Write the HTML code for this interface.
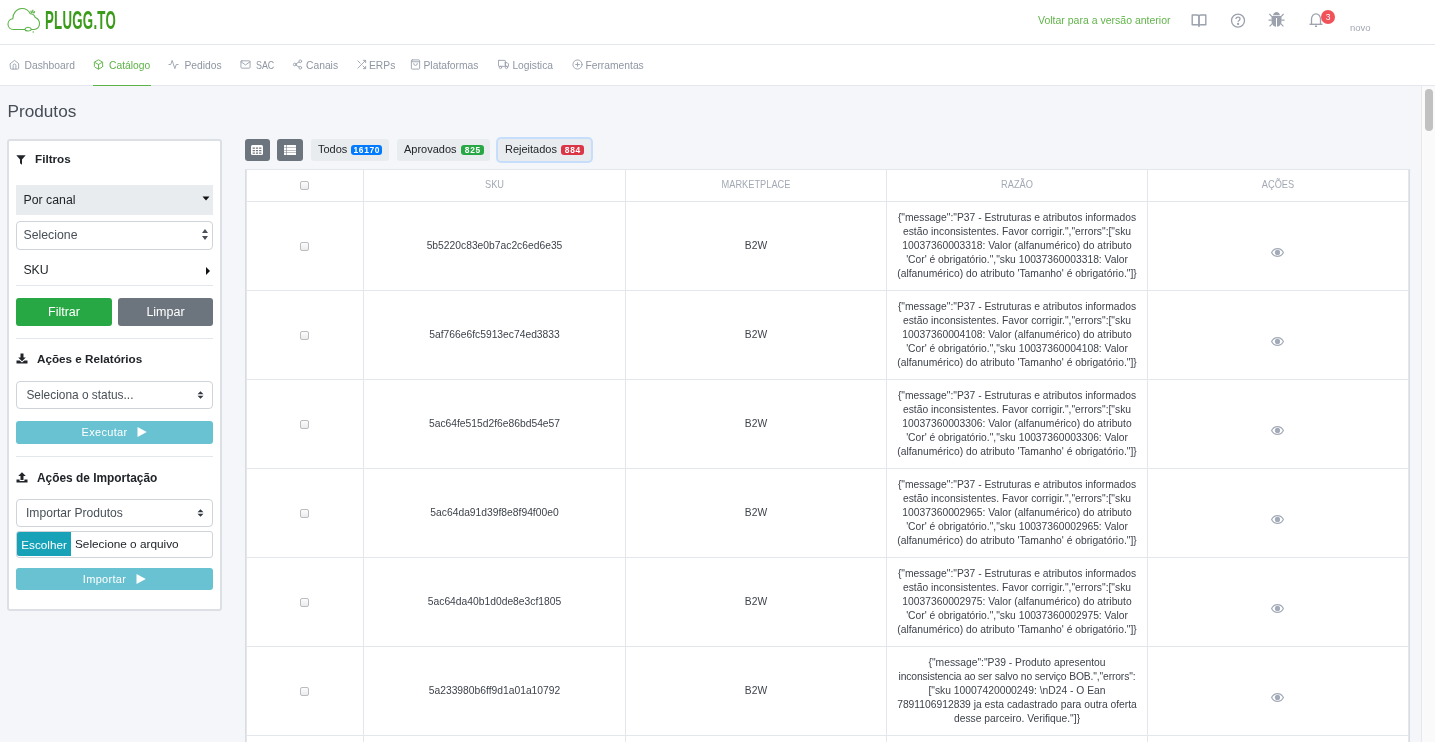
<!DOCTYPE html>
<html><head><meta charset="utf-8">
<style>
*{box-sizing:border-box;margin:0;padding:0}
html,body{width:1435px;height:742px;overflow:hidden;will-change:transform;background:#f5f6fa;font-family:"Liberation Sans",sans-serif;position:relative}
.abs{position:absolute}
#hdr{left:0;top:0;width:1435px;height:45px;background:#fff;border-bottom:1px solid #e4e7ee}
#nav{left:0;top:45px;width:1435px;height:41px;background:#fff;border-bottom:1px solid #e4e7ee}
.nv{position:absolute;top:59px;font-size:10.3px;color:#8c93a3;white-space:nowrap;line-height:14px}
.nv svg{position:absolute;top:1px}
#uline{left:93px;top:85px;width:58px;height:1px;background:#5db446}
#title{left:7.5px;top:100.5px;font-size:17.2px;color:#474d56;line-height:20px}
#card{left:7px;top:139px;width:215px;height:472px;background:#fff;border:2px solid #dce0e5;border-radius:3px}
.c{position:absolute;white-space:nowrap}
.vl{top:169px;width:1px;height:600px;background:#e3e6eb}
.hl{left:246px;width:1163px;height:1px;background:#e3e6eb}
.th{top:178px;font-size:10.4px;color:#a3a9b4;text-align:center;line-height:14px;transform:scaleX(0.89)}
.td{font-size:10.3px;color:#3e434b;text-align:center;line-height:14px;white-space:nowrap}
.chk{width:9px;height:9px;border:1px solid #b9bcc1;border-radius:2px;background:linear-gradient(#fcfcfc,#ececec)}
.tbtn{height:22px;background:#e9ecef;border-radius:3px;font-size:11px;color:#212529;line-height:14px;white-space:nowrap}
.tbtn>span:first-child{top:3px}
.bdg{position:absolute;top:6px;height:10px;border-radius:3px;color:#fff;font-size:8.4px;font-weight:bold;line-height:11px;text-align:center;letter-spacing:0.7px;text-indent:0.7px}
.btn{border-radius:3px;color:#fff;font-size:12.5px;text-align:center;line-height:28px}
.btn2{border-radius:3px;background:#68c2d1;color:#fff;font-size:11px;text-align:center;line-height:22px;letter-spacing:0.3px}
#tbl{left:245px;top:169px;width:1165px;height:600px;background:#fff;border:1px solid #d9dce1;border-top-color:#e3e6eb}
#sb{left:1421px;top:86px;width:14px;height:656px;background:#fafafa;border-left:1px solid #e8e8e8}
#thumb{left:1425px;top:89px;width:8px;height:42px;border-radius:4px;background:#c1c1c1}
</style></head><body>
<div id="hdr" class="abs">
<svg class="abs" style="left:7px;top:7px" width="34" height="26" viewBox="0 0 34 26" fill="none" stroke="#5bb246" stroke-width="1.1">
<path d="M6.5 22.5 C3 22.5 1 20 1 17.2 C1 14.2 3.2 12 5.8 11.8 C5.8 6.5 9.5 1.5 15 1.5 C19 1.5 22 4 23.3 6.8 C25.5 6.8 27.5 8.5 28.3 10.5 C31 11.5 32.5 14 32.5 16.8 C32.5 20.2 30 22.5 27 22.5 L24.5 22.5 C24 21 22.5 20.3 21 20.3 C19.5 20.3 18.3 21 17.8 22.5 Z"/>
<path d="M17.8 22.5 C18.2 23.6 19.5 24 21 24 C22.5 24 24 23.6 24.5 22.5"/>
<path d="M23.8 3.6 L24.6 6.2 M25.8 2.8 L25.8 5.8 M27.8 4.2 L26.6 6.4" stroke-width="1.2"/>
<circle cx="26.2" cy="25" r="0.7" fill="#5bb246" stroke="none"/>
</svg>
<div class="abs" style="left:45px;top:5px;font-size:26px;font-weight:bold;color:#3b9c1b;transform:scaleX(0.51);transform-origin:0 0;line-height:30px;letter-spacing:0.5px">PLUGG.TO</div>
<div class="abs" style="left:1038px;top:13px;font-size:10.5px;color:#62b44b;line-height:14px;white-space:nowrap">Voltar para a versão anterior</div>
<svg class="abs" style="left:1191px;top:13px" width="16" height="15" viewBox="0 0 16 15" fill="none" stroke="#9ba1ad" stroke-width="1.4" stroke-linejoin="round">
<path d="M1.2 2 H6 C7.2 2 8 2.6 8 3.6 V12.6 C8 12 7.2 11.8 6 11.8 H1.2 Z"/><path d="M14.8 2 H10 C8.8 2 8 2.6 8 3.6 V12.6 C8 12 8.8 11.8 10 11.8 H14.8 Z"/><path d="M8 12.4 V14" stroke-width="1.3"/>
</svg>
<svg class="abs" style="left:1230px;top:13px" width="16" height="16" viewBox="0 0 16 16" fill="none" stroke="#9ba1ad" stroke-width="1.3">
<circle cx="8" cy="7.6" r="6.5"/><path d="M6 6.1 C6 4.9 6.9 4.2 8 4.2 C9.1 4.2 10 4.9 10 5.9 C10 7.3 8.1 7.5 8.1 8.8"/><circle cx="8.1" cy="10.9" r="0.5" fill="#9ba1ad"/>
</svg>
<svg class="abs" style="left:1268px;top:11px" width="17" height="17" viewBox="0 0 17 17" fill="#9ba1ad">
<path d="M5 4.2 C5.3 2.3 6.7 1 8.5 1 C10.3 1 11.7 2.3 12 4.2 Z"/>
<path d="M4.2 5 H12.8 C13.2 5 13.5 5.3 13.5 5.7 V10 C13.5 13 11.5 15.6 9 15.8 V7 H8 V15.8 C5.5 15.6 3.5 13 3.5 10 V5.7 C3.5 5.3 3.8 5 4.2 5 Z"/>
<path d="M1.8 2.6 L4.4 5.2 L3.6 6 L1 3.4 Z M15.2 2.6 L12.6 5.2 L13.4 6 L16 3.4 Z M0.5 8.6 H3.6 V9.8 H0.5 Z M13.4 8.6 H16.5 V9.8 H13.4 Z M1.2 15 L3.8 12.2 L4.6 13 L2 15.8 Z M15.8 15 L13.2 12.2 L12.4 13 L15 15.8 Z"/>
</svg>
<svg class="abs" style="left:1308px;top:12px" width="16" height="16" viewBox="0 0 16 16" fill="none" stroke="#9ba1ad" stroke-width="1.3">
<path d="M3.5 12 V7 C3.5 4.2 5.5 1.8 8 1.8 C10.5 1.8 12.5 4.2 12.5 7 V12"/><path d="M1.5 12.3 H14.5"/><path d="M7 14.3 H9" stroke-width="1.5"/>
</svg>
<div class="abs" style="left:1321px;top:10px;width:14px;height:14px;border-radius:7px;background:#f1525a;color:#fff;font-size:8.5px;line-height:14px;text-align:center">3</div>
<div class="abs" style="left:1350px;top:22px;font-size:9.5px;color:#a3a8b3;line-height:12px">novo</div>
</div>
<div id="nav" class="abs"></div>
<svg class="abs" style="left:8.5px;top:58.5px" width="11" height="11" viewBox="0 0 24 24" fill="none" stroke="#9aa1ae" stroke-width="2" stroke-linecap="round" stroke-linejoin="round"><path d="M3 10 L12 3 L21 10 V20 a2 2 0 0 1 -2 2 H5 a2 2 0 0 1 -2 -2 Z"/><path d="M9 22 V14 a3 3 0 0 1 6 0 V22"/></svg><div class="nv" style="left:24.5px;color:#8f96a3">Dashboard</div><svg class="abs" style="left:92.5px;top:58.5px" width="11" height="11" viewBox="0 0 24 24" fill="none" stroke="#5db446" stroke-width="2" stroke-linecap="round" stroke-linejoin="round"><path d="M21 16V8a2 2 0 0 0-1-1.73l-7-4a2 2 0 0 0-2 0l-7 4A2 2 0 0 0 3 8v8a2 2 0 0 0 1 1.73l7 4a2 2 0 0 0 2 0l7-4A2 2 0 0 0 21 16z"/><polyline points="3.27 6.96 12 12.01 20.73 6.96"/><line x1="12" y1="22.08" x2="12" y2="12"/></svg><div class="nv" style="left:109px;color:#5db446">Catálogo</div><svg class="abs" style="left:168px;top:58.5px" width="11" height="11" viewBox="0 0 24 24" fill="none" stroke="#9aa1ae" stroke-width="2" stroke-linecap="round" stroke-linejoin="round"><polyline points="22 12 18 12 15 21 9 3 6 12 2 12"/></svg><div class="nv" style="left:184.4px;color:#8f96a3">Pedidos</div><svg class="abs" style="left:239.5px;top:58.5px" width="11" height="11" viewBox="0 0 24 24" fill="none" stroke="#9aa1ae" stroke-width="2" stroke-linecap="round" stroke-linejoin="round"><path d="M4 4h16c1.1 0 2 .9 2 2v12c0 1.1-.9 2-2 2H4c-1.1 0-2-.9-2-2V6c0-1.1.9-2 2-2z"/><polyline points="22,6 12,13 2,6"/></svg><div class="nv" style="left:256px;color:#8f96a3;transform:scaleX(0.86);transform-origin:0 0">SAC</div><svg class="abs" style="left:292px;top:58.5px" width="11" height="11" viewBox="0 0 24 24" fill="none" stroke="#9aa1ae" stroke-width="2" stroke-linecap="round" stroke-linejoin="round"><circle cx="18" cy="5" r="3"/><circle cx="6" cy="12" r="3"/><circle cx="18" cy="19" r="3"/><line x1="8.59" y1="13.51" x2="15.42" y2="17.49"/><line x1="15.41" y1="6.51" x2="8.59" y2="10.49"/></svg><div class="nv" style="left:306px;color:#8f96a3">Canais</div><svg class="abs" style="left:355.5px;top:58.5px" width="11" height="11" viewBox="0 0 24 24" fill="none" stroke="#9aa1ae" stroke-width="2" stroke-linecap="round" stroke-linejoin="round"><polyline points="16 3 21 3 21 8"/><line x1="4" y1="20" x2="21" y2="3"/><polyline points="21 16 21 21 16 21"/><line x1="15" y1="15" x2="21" y2="21"/><line x1="4" y1="4" x2="9" y2="9"/></svg><div class="nv" style="left:369px;color:#8f96a3">ERPs</div><svg class="abs" style="left:410px;top:58.5px" width="11" height="11" viewBox="0 0 24 24" fill="none" stroke="#9aa1ae" stroke-width="2" stroke-linecap="round" stroke-linejoin="round"><rect x="3" y="2" width="18" height="20" rx="2"/><line x1="3" y1="6" x2="21" y2="6"/><path d="M16 10a4 4 0 0 1-8 0"/></svg><div class="nv" style="left:423.5px;color:#8f96a3">Plataformas</div><svg class="abs" style="left:497.5px;top:58.5px" width="11" height="11" viewBox="0 0 24 24" fill="none" stroke="#9aa1ae" stroke-width="2" stroke-linecap="round" stroke-linejoin="round"><rect x="1" y="3" width="15" height="13" rx="1"/><polygon points="16 8 20 8 23 11 23 16 16 16 16 8"/><circle cx="5.5" cy="18.5" r="2.5"/><circle cx="18.5" cy="18.5" r="2.5"/></svg><div class="nv" style="left:512.4px;color:#8f96a3">Logistica</div><svg class="abs" style="left:571.5px;top:58.5px" width="11" height="11" viewBox="0 0 24 24" fill="none" stroke="#9aa1ae" stroke-width="2" stroke-linecap="round" stroke-linejoin="round"><circle cx="12" cy="12" r="10"/><line x1="12" y1="8" x2="12" y2="16"/><line x1="8" y1="12" x2="16" y2="12"/></svg><div class="nv" style="left:585.4px;color:#8f96a3">Ferramentas</div>
<div id="uline" class="abs"></div>
<div id="title" class="abs">Produtos</div>
<div id="card" class="abs"></div>
<svg class="abs" style="left:16px;top:155px" width="10" height="10" viewBox="0 0 10 10"><path d="M0.3 0.3 H9.7 L6 4.6 V9.8 L4 8.2 V4.6 Z" fill="#212529"/></svg>
<div class="c sb" style="left:35px;top:152px;font-size:11.7px;font-weight:bold;color:#212529;line-height:14px">Filtros</div>
<div class="abs" style="left:16px;top:185px;width:197px;height:30px;background:#e9ecef"></div>
<div class="c" style="left:23.5px;top:193px;font-size:12.3px;color:#212529;line-height:14px">Por canal</div>
<svg class="abs" style="left:202px;top:196px" width="8" height="5" viewBox="0 0 8 5"><path d="M0.5 0.5 H7.5 L4 4.5 Z" fill="#111"/></svg>
<div class="abs" style="left:16px;top:221px;width:197px;height:29px;border:1px solid #ced4da;border-radius:4px;background:#fff"></div>
<div class="c" style="left:23.5px;top:228px;font-size:12.3px;color:#495057;line-height:14px">Selecione</div>
<svg class="abs" style="left:201px;top:228px" width="8" height="13" viewBox="0 0 8 13"><path d="M1 5 L4 1 L7 5 Z M1 8 L4 12 L7 8 Z" fill="#495057"/></svg>
<div class="c" style="left:23.4px;top:263px;font-size:12.3px;color:#212529;line-height:14px">SKU</div>
<svg class="abs" style="left:205px;top:266px" width="6" height="10" viewBox="0 0 6 10"><path d="M1 1 L5 5 L1 9 Z" fill="#111"/></svg>
<div class="abs" style="left:16px;top:285px;width:197px;height:1px;background:#e3e6ea"></div>
<div class="abs btn" style="left:16px;top:298px;width:96px;height:28px;background:#28a745">Filtrar</div>
<div class="abs btn" style="left:118px;top:298px;width:95px;height:28px;background:#6c757d">Limpar</div>
<div class="abs" style="left:16px;top:338px;width:197px;height:1px;background:#e3e6ea"></div>
<svg class="abs" style="left:16px;top:353px" width="12" height="11" viewBox="0 0 12 11"><path d="M4.5 0.5 H7.5 V4.5 H9.8 L6 8.2 L2.2 4.5 H4.5 Z" fill="#212529"/><path d="M0.5 7.5 H3.6 L6 9.6 L8.4 7.5 H11.5 V10.5 H0.5 Z" fill="#212529"/></svg>
<div class="c" style="left:37px;top:352px;font-size:11.7px;font-weight:bold;color:#212529;line-height:14px">Ações e Relatórios</div>
<div class="abs" style="left:16px;top:381px;width:197px;height:28px;border:1px solid #ced4da;border-radius:4px;background:#fff"></div>
<div class="c" style="left:26.4px;top:388px;font-size:11.9px;color:#495057;line-height:14px">Seleciona o status...</div>
<svg class="abs" style="left:196.5px;top:390.5px" width="7" height="8" viewBox="0 0 7 8"><path d="M0.5 3.3 L3.5 0.3 L6.5 3.3 Z M0.5 4.7 L3.5 7.7 L6.5 4.7 Z" fill="#343a40"/></svg>
<div class="abs btn2" style="left:16px;top:421px;width:197px;height:23px"><span>Executar</span><svg width="10" height="10" viewBox="0 0 10 10" style="margin-left:10px;vertical-align:-1px"><path d="M0.5 0 L9.8 5 L0.5 10 Z" fill="#fff"/></svg></div>
<div class="abs" style="left:16px;top:456px;width:197px;height:1px;background:#e3e6ea"></div>
<svg class="abs" style="left:16px;top:472px" width="12" height="11" viewBox="0 0 12 11"><path d="M4.5 8 H7.5 V4 H9.8 L6 0.3 L2.2 4 H4.5 Z" fill="#212529"/><path d="M0.5 7.5 H3.6 V9 H8.4 V7.5 H11.5 V10.5 H0.5 Z" fill="#212529"/></svg>
<div class="c" style="left:37px;top:470.5px;font-size:11.9px;font-weight:bold;color:#212529;line-height:14px">Ações de Importação</div>
<div class="abs" style="left:16px;top:499px;width:197px;height:28px;border:1px solid #ced4da;border-radius:4px;background:#fff"></div>
<div class="c" style="left:26px;top:506px;font-size:12.1px;color:#495057;line-height:14px">Importar Produtos</div>
<svg class="abs" style="left:196.5px;top:508.5px" width="7" height="8" viewBox="0 0 7 8"><path d="M0.5 3.3 L3.5 0.3 L6.5 3.3 Z M0.5 4.7 L3.5 7.7 L6.5 4.7 Z" fill="#343a40"/></svg>
<div class="abs" style="left:16px;top:531px;width:197px;height:27px;border:1px solid #ced4da;border-radius:3px;background:#fff"></div>
<div class="abs" style="left:17px;top:532px;width:54px;height:24px;background:#17a2b8;border-radius:2px 0 0 2px"></div>
<div class="c" style="left:21.3px;top:537.5px;font-size:11.7px;color:#fff;line-height:14px">Escolher</div>
<div class="c" style="left:75px;top:537px;font-size:11.8px;color:#212529;line-height:14px">Selecione o arquivo</div>
<div class="abs btn2" style="left:16px;top:568px;width:197px;height:22px"><span>Importar</span><svg width="10" height="10" viewBox="0 0 10 10" style="margin-left:10px;vertical-align:-1px"><path d="M0.5 0 L9.8 5 L0.5 10 Z" fill="#fff"/></svg></div>

<div class="abs" style="left:245px;top:139px;width:25px;height:22px;background:#6c757d;border-radius:3px"></div>
<svg class="abs" style="left:251px;top:145px" width="12" height="10" viewBox="0 0 12 10"><rect x="0" y="0" width="12" height="10" rx="1.5" fill="#fff"/><path d="M1.6 2.5 H3.9 V3.7 H1.6 Z M4.9 2.5 H7.1 V3.7 H4.9 Z M8.1 2.5 H10.4 V3.7 H8.1 Z M1.6 5 H3.9 V6.2 H1.6 Z M4.9 5 H7.1 V6.2 H4.9 Z M8.1 5 H10.4 V6.2 H8.1 Z M1.6 7.5 H3.9 V8.7 H1.6 Z M4.9 7.5 H7.1 V8.7 H4.9 Z M8.1 7.5 H10.4 V8.7 H8.1 Z" fill="#6f767d"/></svg>
<div class="abs" style="left:277px;top:139px;width:26px;height:22px;background:#6c757d;border-radius:3px"></div>
<svg class="abs" style="left:284px;top:145px" width="12" height="10" viewBox="0 0 12 10"><rect x="0" y="0" width="12" height="10" rx="0.5" fill="#fff"/><path d="M0 2.4 H12 V3 H0 Z M0 5 H12 V5.6 H0 Z M0 7.4 H12 V8 H0 Z M2.2 0 H2.8 V10 H2.2 Z" fill="#7d848b"/></svg>
<div class="abs tbtn" style="left:311px;top:139px;width:78px"><span style="position:absolute;left:7px">Todos</span><span class="bdg" style="left:40px;width:31px;background:#007bff">16170</span></div>
<div class="abs tbtn" style="left:397px;top:139px;width:93px"><span style="position:absolute;left:7px">Aprovados</span><span class="bdg" style="left:64px;width:23px;background:#28a745">825</span></div>
<div class="abs" style="left:496px;top:137px;width:97px;height:26px;border-radius:5px;background:#c6defb"></div>
<div class="abs tbtn" style="left:498px;top:139px;width:93px"><span style="position:absolute;left:7px">Rejeitados</span><span class="bdg" style="left:63px;width:23px;background:#dc3545">884</span></div>
<div id="tbl" class="abs"></div>
<div class="abs vl" style="left:363px"></div><div class="abs vl" style="left:625px"></div><div class="abs vl" style="left:886px"></div><div class="abs vl" style="left:1147px"></div><div class="abs vl" style="left:246px"></div><div class="abs vl" style="left:1408px"></div><div class="abs hl" style="top:201px"></div><div class="abs hl" style="top:290px"></div><div class="abs hl" style="top:379px"></div><div class="abs hl" style="top:468px"></div><div class="abs hl" style="top:557px"></div><div class="abs hl" style="top:646px"></div><div class="abs hl" style="top:735px"></div><div class="abs chk" style="left:300px;top:181px"></div><div class="abs th" style="left:364px;width:261px">SKU</div><div class="abs th" style="left:626px;width:260px">MARKETPLACE</div><div class="abs th" style="left:887px;width:260px">RAZÃO</div><div class="abs th" style="left:1148px;width:260px">AÇÕES</div><div class="abs chk" style="left:300px;top:241.7px"></div><div class="abs td" style="left:364px;width:261px;top:238.5px">5b5220c83e0b7ac2c6ed6e35</div><div class="abs td" style="left:626px;width:260px;top:238.5px">B2W</div><div class="abs td" style="left:887px;width:260px;top:210.5px">{"message":"P37 - Estruturas e atributos informados<br>estão inconsistentes. Favor corrigir.","errors":["sku<br>10037360003318: Valor (alfanumérico) do atributo<br>'Cor' é obrigatório.","sku 10037360003318: Valor<br>(alfanumérico) do atributo 'Tamanho' é obrigatório."]}</div><svg class="abs" style="left:1270.5px;top:247.5px" width="13" height="9" viewBox="0 0 13 9"><path d="M6.5 0.6 C9.3 0.6 11.5 2.6 12.4 4.5 C11.5 6.4 9.3 8.4 6.5 8.4 C3.7 8.4 1.5 6.4 0.6 4.5 C1.5 2.6 3.7 0.6 6.5 0.6 Z" fill="none" stroke="#a4abb8" stroke-width="1.2"/><circle cx="6.5" cy="4.4" r="2.6" fill="#a4abb8"/></svg><div class="abs chk" style="left:300px;top:330.7px"></div><div class="abs td" style="left:364px;width:261px;top:327.5px">5af766e6fc5913ec74ed3833</div><div class="abs td" style="left:626px;width:260px;top:327.5px">B2W</div><div class="abs td" style="left:887px;width:260px;top:299.5px">{"message":"P37 - Estruturas e atributos informados<br>estão inconsistentes. Favor corrigir.","errors":["sku<br>10037360004108: Valor (alfanumérico) do atributo<br>'Cor' é obrigatório.","sku 10037360004108: Valor<br>(alfanumérico) do atributo 'Tamanho' é obrigatório."]}</div><svg class="abs" style="left:1270.5px;top:336.5px" width="13" height="9" viewBox="0 0 13 9"><path d="M6.5 0.6 C9.3 0.6 11.5 2.6 12.4 4.5 C11.5 6.4 9.3 8.4 6.5 8.4 C3.7 8.4 1.5 6.4 0.6 4.5 C1.5 2.6 3.7 0.6 6.5 0.6 Z" fill="none" stroke="#a4abb8" stroke-width="1.2"/><circle cx="6.5" cy="4.4" r="2.6" fill="#a4abb8"/></svg><div class="abs chk" style="left:300px;top:419.7px"></div><div class="abs td" style="left:364px;width:261px;top:416.5px">5ac64fe515d2f6e86bd54e57</div><div class="abs td" style="left:626px;width:260px;top:416.5px">B2W</div><div class="abs td" style="left:887px;width:260px;top:388.5px">{"message":"P37 - Estruturas e atributos informados<br>estão inconsistentes. Favor corrigir.","errors":["sku<br>10037360003306: Valor (alfanumérico) do atributo<br>'Cor' é obrigatório.","sku 10037360003306: Valor<br>(alfanumérico) do atributo 'Tamanho' é obrigatório."]}</div><svg class="abs" style="left:1270.5px;top:425.5px" width="13" height="9" viewBox="0 0 13 9"><path d="M6.5 0.6 C9.3 0.6 11.5 2.6 12.4 4.5 C11.5 6.4 9.3 8.4 6.5 8.4 C3.7 8.4 1.5 6.4 0.6 4.5 C1.5 2.6 3.7 0.6 6.5 0.6 Z" fill="none" stroke="#a4abb8" stroke-width="1.2"/><circle cx="6.5" cy="4.4" r="2.6" fill="#a4abb8"/></svg><div class="abs chk" style="left:300px;top:508.7px"></div><div class="abs td" style="left:364px;width:261px;top:505.5px">5ac64da91d39f8e8f94f00e0</div><div class="abs td" style="left:626px;width:260px;top:505.5px">B2W</div><div class="abs td" style="left:887px;width:260px;top:477.5px">{"message":"P37 - Estruturas e atributos informados<br>estão inconsistentes. Favor corrigir.","errors":["sku<br>10037360002965: Valor (alfanumérico) do atributo<br>'Cor' é obrigatório.","sku 10037360002965: Valor<br>(alfanumérico) do atributo 'Tamanho' é obrigatório."]}</div><svg class="abs" style="left:1270.5px;top:514.5px" width="13" height="9" viewBox="0 0 13 9"><path d="M6.5 0.6 C9.3 0.6 11.5 2.6 12.4 4.5 C11.5 6.4 9.3 8.4 6.5 8.4 C3.7 8.4 1.5 6.4 0.6 4.5 C1.5 2.6 3.7 0.6 6.5 0.6 Z" fill="none" stroke="#a4abb8" stroke-width="1.2"/><circle cx="6.5" cy="4.4" r="2.6" fill="#a4abb8"/></svg><div class="abs chk" style="left:300px;top:597.7px"></div><div class="abs td" style="left:364px;width:261px;top:594.5px">5ac64da40b1d0de8e3cf1805</div><div class="abs td" style="left:626px;width:260px;top:594.5px">B2W</div><div class="abs td" style="left:887px;width:260px;top:566.5px">{"message":"P37 - Estruturas e atributos informados<br>estão inconsistentes. Favor corrigir.","errors":["sku<br>10037360002975: Valor (alfanumérico) do atributo<br>'Cor' é obrigatório.","sku 10037360002975: Valor<br>(alfanumérico) do atributo 'Tamanho' é obrigatório."]}</div><svg class="abs" style="left:1270.5px;top:603.5px" width="13" height="9" viewBox="0 0 13 9"><path d="M6.5 0.6 C9.3 0.6 11.5 2.6 12.4 4.5 C11.5 6.4 9.3 8.4 6.5 8.4 C3.7 8.4 1.5 6.4 0.6 4.5 C1.5 2.6 3.7 0.6 6.5 0.6 Z" fill="none" stroke="#a4abb8" stroke-width="1.2"/><circle cx="6.5" cy="4.4" r="2.6" fill="#a4abb8"/></svg><div class="abs chk" style="left:300px;top:686.7px"></div><div class="abs td" style="left:364px;width:261px;top:683.5px">5a233980b6ff9d1a01a10792</div><div class="abs td" style="left:626px;width:260px;top:683.5px">B2W</div><div class="abs td" style="left:887px;width:260px;top:655.5px">{"message":"P39 - Produto apresentou<br><span style="letter-spacing:-0.13px">inconsistencia ao ser salvo no serviço BOB.","errors":</span><br>["sku 10007420000249: \nD24 - O Ean<br>7891106912839 ja esta cadastrado para outra oferta<br>desse parceiro. Verifique."]}</div><svg class="abs" style="left:1270.5px;top:692.5px" width="13" height="9" viewBox="0 0 13 9"><path d="M6.5 0.6 C9.3 0.6 11.5 2.6 12.4 4.5 C11.5 6.4 9.3 8.4 6.5 8.4 C3.7 8.4 1.5 6.4 0.6 4.5 C1.5 2.6 3.7 0.6 6.5 0.6 Z" fill="none" stroke="#a4abb8" stroke-width="1.2"/><circle cx="6.5" cy="4.4" r="2.6" fill="#a4abb8"/></svg>
<div id="sb" class="abs"></div>
<div id="thumb" class="abs"></div>
</body></html>
